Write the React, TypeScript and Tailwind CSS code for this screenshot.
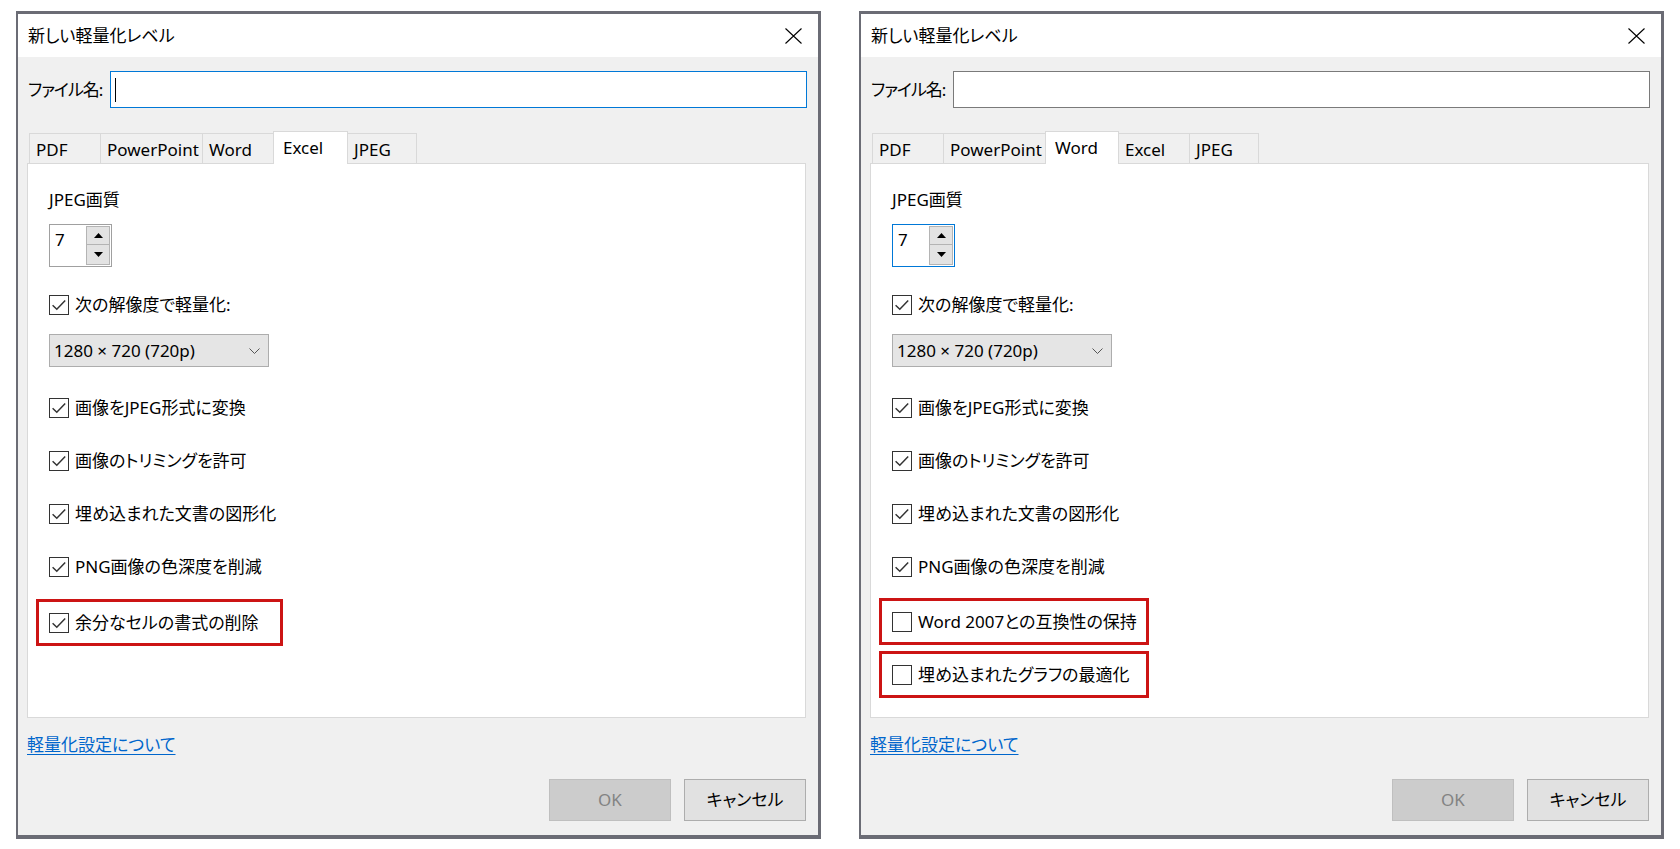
import React from "react";

const FONT =
  "font-['Noto_Sans','Noto_Sans_CJK_JP',sans-serif] [font-feature-settings:'palt']";

function Checkbox({ checked }: { checked: boolean }) {
  return (
    <div className="w-[20px] h-[20px] border border-[#333333] bg-white shrink-0">
      {checked && (
        <svg width="18" height="18" viewBox="0 0 18 18" className="block">
          <path
            d="M2.6 9.2 L6.8 13.2 L15.2 4.6"
            fill="none"
            stroke="#333333"
            strokeWidth="1.5"
          />
        </svg>
      )}
    </div>
  );
}

function CheckRow({
  label,
  checked,
  className = "",
}: {
  label: string;
  checked: boolean;
  className?: string;
}) {
  return (
    <div className={`flex items-center h-[24px] gap-[6px] ${className}`}>
      <Checkbox checked={checked} />
      <span className="text-[17px] leading-[24px] text-black whitespace-nowrap">
        {label}
      </span>
    </div>
  );
}

function RedRow({
  label,
  checked,
  width,
  className = "",
}: {
  label: string;
  checked: boolean;
  width: string;
  className?: string;
}) {
  return (
    <div
      className={`ml-[-13px] h-[47px] border-[3px] border-[#cc1414] pl-[10px] flex items-center ${width} ${className}`}
    >
      <CheckRow label={label} checked={checked} />
    </div>
  );
}

function CloseIcon() {
  return (
    <svg width="17" height="16" viewBox="0 0 17 16" className="block">
      <path d="M0.5 0.5 L16.5 15.5 M16.5 0.5 L0.5 15.5" stroke="#000" strokeWidth="1.1" fill="none" />
    </svg>
  );
}

function SpinBox({ focused }: { focused: boolean }) {
  return (
    <div
      className={`mt-[12px] w-[63px] h-[43px] border bg-white flex ${
        focused ? "border-[#0078d7]" : "border-[#a0a0a0]"
      }`}
    >
      <div className="flex-1 pl-[5px] pt-[3px] text-[17px] leading-[24px] text-black">7</div>
      <div className="flex flex-col pt-[1px] pr-[1px]">
        <div className="w-[24px] h-[19px] bg-[#e3e3e3] border border-[#b4b4b4] flex items-center justify-center">
          <svg width="9" height="5" viewBox="0 0 9 5" className="block">
            <path d="M0 5 L4.5 0 L9 5 Z" fill="#000" />
          </svg>
        </div>
        <div className="w-[24px] h-[20px] bg-[#e3e3e3] border border-[#b4b4b4] border-t-0 flex items-center justify-center">
          <svg width="9" height="5" viewBox="0 0 9 5" className="block">
            <path d="M0 0 L9 0 L4.5 5 Z" fill="#000" />
          </svg>
        </div>
      </div>
    </div>
  );
}

function Dropdown() {
  return (
    <div className="mt-[17px] w-[220px] h-[33px] border border-[#adadad] bg-[#e5e5e5] flex items-center justify-between pl-[4px] pr-[8px]">
      <span className="text-[17px] leading-[24px] text-black">1280 × 720 (720p)</span>
      <svg width="11" height="6" viewBox="0 0 11 6" className="block">
        <path d="M0.5 0.5 L5.5 5.5 L10.5 0.5" stroke="#555" strokeWidth="1" fill="none" />
      </svg>
    </div>
  );
}

type TabDef = { name: string; w: string };

function Tabs({ tabs, selected }: { tabs: TabDef[]; selected: string }) {
  const selIdx = tabs.findIndex((t) => t.name === selected);
  return (
    <div className="mt-[23px] h-[32px] pl-[2px] flex items-end">
      {tabs.map((t, i) => {
        const isSel = t.name === selected;
        const isLast = i === tabs.length - 1;
        if (isSel) {
          return (
            <div
              key={t.name}
              className={`${t.w} h-[33px] mb-[-1px] relative z-10 bg-white border-t border-l border-r border-[#d9d9d9] pl-[9px] pt-[4px] text-[17px] leading-[24px] text-black whitespace-nowrap`}
            >
              {t.name}
            </div>
          );
        }
        const noLeft = i === selIdx + 1;
        return (
          <div
            key={t.name}
            className={`${t.w} h-[30px] bg-[#f0f0f0] border-t border-[#d9d9d9] ${
              noLeft ? "" : "border-l"
            } ${isLast ? "border-r" : ""} pl-[6px] pt-[4px] text-[17px] leading-[24px] text-black whitespace-nowrap`}
          >
            {t.name}
          </div>
        );
      })}
    </div>
  );
}

function Dialog({ variant }: { variant: "excel" | "word" }) {
  const isExcel = variant === "excel";
  const tabs: TabDef[] = isExcel
    ? [
        { name: "PDF", w: "w-[71px]" },
        { name: "PowerPoint", w: "w-[102px]" },
        { name: "Word", w: "w-[71px]" },
        { name: "Excel", w: "w-[75px]" },
        { name: "JPEG", w: "w-[69px]" },
      ]
    : [
        { name: "PDF", w: "w-[71px]" },
        { name: "PowerPoint", w: "w-[102px]" },
        { name: "Word", w: "w-[74px]" },
        { name: "Excel", w: "w-[70px]" },
        { name: "JPEG", w: "w-[70px]" },
      ];
  return (
    <div className="w-[805px] h-[828px] border-t-[3px] border-l-[2px] border-r-[3px] border-b-[4px] border-[#6b6c75] flex flex-col shrink-0">
      <div className="h-[43px] bg-white flex items-center justify-between pl-[10px] pr-[16px]">
        <span className="text-[17px] leading-[24px] text-black">新しい軽量化レベル</span>
        <CloseIcon />
      </div>
      <div className="flex-1 bg-[#f0f0f0] pl-[9px] pr-[12px] pt-[14px] flex flex-col">
        <div className="flex items-center h-[37px] mr-[-1px]">
          <span className="pl-[1px] text-[17px] leading-[24px] tracking-[-1px] text-black whitespace-nowrap">
            ファイル名:
          </span>
          <div
            className={`ml-auto w-[697px] h-[37px] bg-white border ${
              isExcel ? "border-[#0078d7]" : "border-[#7a7a7a]"
            } flex items-center pl-[4px]`}
          >
            {isExcel && <div className="w-px h-[24px] bg-black" />}
          </div>
        </div>
        <Tabs tabs={tabs} selected={isExcel ? "Excel" : "Word"} />
        <div className="h-[555px] bg-white border border-[#d9d9d9] pl-[21px] flex flex-col">
          <div className="mt-[24px] text-[17px] leading-[24px] text-black">JPEG画質</div>
          <SpinBox focused={!isExcel} />
          <CheckRow className="mt-[26px]" label="次の解像度で軽量化:" checked />
          <Dropdown />
          <CheckRow className="mt-[29px]" label="画像をJPEG形式に変換" checked />
          <CheckRow className="mt-[29px]" label="画像のトリミングを許可" checked />
          <CheckRow className="mt-[29px]" label="埋め込まれた文書の図形化" checked />
          <CheckRow className="mt-[29px]" label="PNG画像の色深度を削減" checked />
          {isExcel ? (
            <RedRow className="mt-[20px]" width="w-[247px]" label="余分なセルの書式の削除" checked />
          ) : (
            <>
              <RedRow
                className="mt-[19px] ml-[-11px]"
                width="w-[270px]"
                label="Word 2007との互換性の保持"
                checked={false}
              />
              <RedRow
                className="mt-[6px] ml-[-11px]"
                width="w-[270px]"
                label="埋め込まれたグラフの最適化"
                checked={false}
              />
            </>
          )}
        </div>
        <div className="mt-[15px] h-[24px]">
          <span className="text-[17px] leading-[24px] text-[#0066cc] underline underline-offset-[3px]">
            軽量化設定について
          </span>
        </div>
        <div className="mt-[22px] flex justify-end gap-[13px]">
          <div className="w-[122px] h-[42px] bg-[#cccccc] border border-[#bfbfbf] flex items-center justify-center text-[17px] text-[#838383]">
            OK
          </div>
          <div className="w-[122px] h-[42px] bg-[#e1e1e1] border border-[#adadad] flex items-center justify-center text-[17px] text-black">
            キャンセル
          </div>
        </div>
      </div>
    </div>
  );
}

export default function App() {
  return (
    <div className={`w-[1680px] h-[849px] bg-white pl-[16px] pt-[11px] flex gap-[38px] ${FONT}`}>
      <Dialog variant="excel" />
      <Dialog variant="word" />
    </div>
  );
}
